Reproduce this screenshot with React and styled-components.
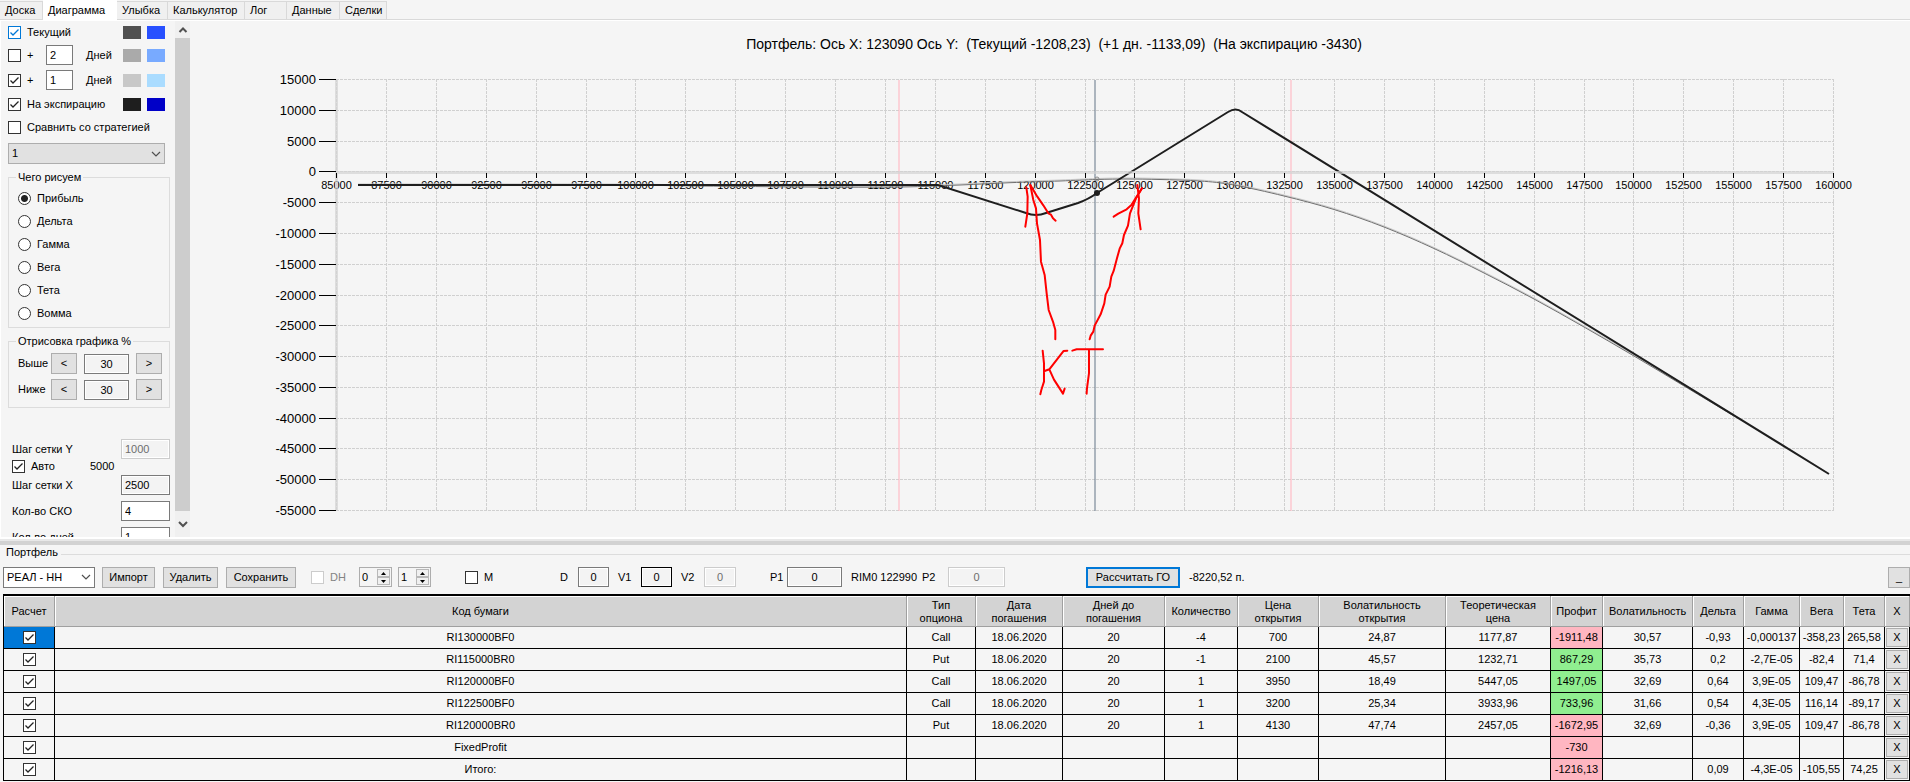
import { useState } from "react";
import styled, { createGlobalStyle } from "styled-components";

const GlobalStyle = createGlobalStyle`
  * { box-sizing: border-box; }
  body {
    margin: 0;
    background: #f5f5f5;
    color: #000;
    font: 11px/13px "Liberation Sans", Arial, sans-serif;
  }
  button, input, select { font: inherit; color: inherit; margin: 0; border-radius: 0; }
`;

const tick = (color) =>
  `url("data:image/svg+xml,%3Csvg xmlns='http://www.w3.org/2000/svg' viewBox='0 0 11 11'%3E%3Cpath d='M1.5 5.5 4 8 9.5 2.5' fill='none' stroke='%23${color}' stroke-width='1.3'/%3E%3C/svg%3E")`;

const Page = styled.div`
  height: 100vh;
  display: flex;
  flex-direction: column;
  overflow: hidden;
`;

const Tabs = styled.nav`
  display: flex;
  align-items: flex-end;
  height: 20px;
  border-bottom: 1px solid #d9d9d9;
`;

const Tab = styled.button`
  width: ${(p) => p.$w}px;
  height: ${(p) => (p.$active ? 20 : 18)}px;
  margin-bottom: ${(p) => (p.$active ? -1 : 0)}px;
  padding: 0 0 0 5px;
  border: 1px solid #d9d9d9;
  border-width: ${(p) => (p.$active ? "0" : "1px 1px 0 0")};
  background: ${(p) => (p.$active ? "#fff" : "#f0f0f0")};
  text-align: left;
`;

const Workspace = styled.main`
  flex: 1;
  min-height: 0;
  display: flex;
  border-top: 1px solid #fff;
  border-left: 1px solid #fff;
`;

const Sidebar = styled.aside`
  width: 174px;
  flex: none;
  padding: 0 5px 0 7px;
  overflow: hidden;
`;

const Scrollbar = styled.div`
  width: 15px;
  flex: none;
  display: flex;
  flex-direction: column;
  background: #f0f0f0;
`;

const ScrollButton = styled.button`
  height: ${(p) => p.$h}px;
  padding: 0;
  border: 0;
  background: none;
  display: flex;
  align-items: center;
  justify-content: center;
`;

const Thumb = styled.div`
  flex: 1;
  background: #cdcdcd;
`;

const LineRow = styled.div`
  display: grid;
  grid-template-columns: 19px 19px 40px 37px 24px 18px;
  align-items: center;
  height: ${(p) => p.$h}px;
`;

const WideLabel = styled.label`
  grid-column: span ${(p) => p.$span};
  white-space: nowrap;
`;

const Swatch = styled.span`
  width: 18px;
  height: 13px;
  background: ${(p) => p.$color};
`;

const Check = styled.input.attrs({ type: "checkbox" })`
  appearance: none;
  flex: none;
  width: 13px;
  height: 13px;
  border: 1px solid ${(p) => (p.$blue ? "#0078d7" : "#333")};
  background: #fff;
  &:checked { background: #fff ${(p) => tick(p.$blue ? "0078d7" : "222222")}; }
  &:disabled { border-color: #ccc; }
`;

const Radio = styled.input.attrs({ type: "radio" })`
  appearance: none;
  width: 13px;
  height: 13px;
  border: 1px solid #333;
  border-radius: 50%;
  background: #fff;
  &:checked { background: radial-gradient(circle, #222 3px, #fff 4px); }
`;

const Input = styled.input`
  width: ${(p) => p.$w}px;
  height: 20px;
  padding: 0 3px;
  border: 1px solid ${(p) => p.$border || "#7a7a7a"};
  background: ${(p) => (p.$flat ? "#f3f3f3" : "#fff")};
  box-shadow: inset 0 0 0 1px #fff;
  text-align: ${(p) => (p.$center ? "center" : "left")};
  &:disabled { border-color: #ccc; color: #6d6d6d; }
`;

const SelectBox = styled.div`
  display: grid;
  align-items: center;
  width: ${(p) => p.$w};
  margin-top: ${(p) => p.$top || 0}px;
  select, svg { grid-area: 1 / 1; }
  svg { justify-self: end; margin-right: 4px; pointer-events: none; }
`;

const Select = styled.select`
  appearance: none;
  width: 100%;
  height: 21px;
  padding: 0 3px;
  border: 1px solid ${(p) => (p.$gray ? "#adadad" : "#7a7a7a")};
  background: ${(p) => (p.$gray ? "#e1e1e1" : "#fff")};
`;

const Group = styled.fieldset`
  margin: ${(p) => p.$top}px 0 0;
  padding: ${(p) => p.$pad} 0 ${(p) => p.$bottom}px 9px;
  border: 1px solid #dcdcdc;
  legend { margin-left: -2px; padding: 0 2px; }
`;

const RadioRow = styled.label`
  display: flex;
  align-items: center;
  gap: 6px;
  height: 23px;
`;

const PercentRow = styled.div`
  display: grid;
  grid-template-columns: 33px 33px 52px 26px;
  align-items: center;
  & + & { margin-top: 5px; }
`;

const Button = styled.button`
  width: ${(p) => p.$w}px;
  height: 21px;
  margin-left: ${(p) => p.$left || 0}px;
  padding: 0;
  border: ${(p) => (p.$focus ? "2px solid #0078d7" : "1px solid #adadad")};
  background: #e1e1e1;
`;

const CollapseButton = styled(Button)`
  margin-left: auto;
`;

const StepRow = styled.div`
  display: flex;
  align-items: center;
  justify-content: space-between;
  margin-top: ${(p) => p.$top}px;
  padding-left: 4px;
`;

const AutoRow = styled.div`
  display: grid;
  grid-template-columns: 19px 59px auto;
  align-items: center;
  height: 14px;
  padding-left: 4px;
`;

const ChartSvg = styled.svg`
  flex: 1;
  min-width: 0;
  height: 100%;
  font-size: 11px;
`;

const ChartTitle = styled.text`
  font-size: 14px;
  text-anchor: middle;
  white-space: pre;
`;

const Splitter = styled.div`
  height: 8px;
  flex: none;
  border-top: 2px solid #fff;
  border-bottom: 4px solid #d2d2d2;
  background: #e8e8e8;
`;

const Portfolio = styled.section`
  flex: none;
  padding: 0 0 1px 3px;
`;

const Caption = styled.h2`
  display: flex;
  align-items: center;
  gap: 3px;
  height: 15px;
  margin: 0 0 0 3px;
  font-size: 11px;
  font-weight: 400;
  &::after { content: ""; flex: 1; margin-top: 3px; border-top: 1px solid #dcdcdc; }
`;

const Toolbar = styled.div`
  display: flex;
  align-items: center;
  height: 34px;
  white-space: nowrap;
`;

const Field = styled.label`
  display: flex;
  align-items: center;
  margin-left: ${(p) => p.$left || 0}px;
  color: ${(p) => (p.$dim ? "#838383" : "inherit")};
`;

const FieldName = styled.span`
  width: ${(p) => p.$w}px;
`;

const CheckField = styled(Field)`
  width: ${(p) => p.$w}px;
  gap: 6px;
`;

const Spin = styled.div`
  display: flex;
  width: 33px;
  height: 20px;
  margin-left: ${(p) => p.$left || 0}px;
  padding: 1px;
  border: 1px solid #adadad;
  input {
    width: 15px;
    flex: 1;
    padding: 0 1px;
    border: 0;
    background: none;
  }
`;

const SpinButtons = styled.div`
  display: grid;
  grid-template-rows: 1fr 1fr;
  width: 13px;
  button {
    display: flex;
    align-items: center;
    justify-content: center;
    padding: 0;
    border: 1px solid #b8b8b8;
    background: #f0f0f0;
  }
`;

const Status = styled.span`
  margin-left: 9px;
`;

const Grid = styled.table`
  width: 100%;
  table-layout: fixed;
  border-collapse: separate;
  border-spacing: 0;
  border-top: 2px solid #000;
  border-left: 1px solid #000;
`;

const Head = styled.th`
  height: 31px;
  padding: 1px ${(p) => p.$pad}px 0;
  border-right: 1px solid #a0a0a0;
  border-bottom: 1px solid #a0a0a0;
  background: #d3d3d3;
  box-shadow: inset 1px 1px #fff;
  font-weight: 400;
`;

const tones = { bad: "#ffb6c1", good: "#90ee90", picked: "#0078d7" };

const Cell = styled.td`
  height: 22px;
  padding: 0;
  border-right: 1px solid #000;
  border-bottom: 1px solid #000;
  background: ${(p) => tones[p.$tone] || "#f5f5f5"};
  text-align: center;
  white-space: nowrap;
  input, button { display: block; margin: 0 auto; }
`;

const CloseButton = styled.button`
  width: 22px;
  height: 19px;
  padding: 0;
  border: 1px solid #adadad;
  background: #e1e1e1;
`;

const tabs = [
  ["Доска", 43], ["Диаграмма", 74], ["Улыбка", 51], ["Калькулятор", 77],
  ["Лог", 42], ["Данные", 53], ["Сделки", 47],
];

const greeks = ["Прибыль", "Дельта", "Гамма", "Вега", "Тета", "Вомма"];

const columns = [
  ["Расчет", 51], ["Код бумаги"], ["Тип опциона", 69], ["Дата погашения", 87],
  ["Дней до погашения", 102], ["Количество", 73], ["Цена открытия", 81],
  ["Волатильность открытия", 127], ["Теоретическая цена", 105], ["Профит", 52],
  ["Волатильность", 90], ["Дельта", 51], ["Гамма", 56], ["Вега", 44],
  ["Тета", 41], ["X", 25],
];

const rows = [
  ["RI130000BF0", "Call", "18.06.2020", "20", "-4", "700", "24,87", "1177,87", "-1911,48", "30,57", "-0,93", "-0,000137", "-358,23", "265,58"],
  ["RI115000BR0", "Put", "18.06.2020", "20", "-1", "2100", "45,57", "1232,71", "867,29", "35,73", "0,2", "-2,7E-05", "-82,4", "71,4"],
  ["RI120000BF0", "Call", "18.06.2020", "20", "1", "3950", "18,49", "5447,05", "1497,05", "32,69", "0,64", "3,9E-05", "109,47", "-86,78"],
  ["RI122500BF0", "Call", "18.06.2020", "20", "1", "3200", "25,34", "3933,96", "733,96", "31,66", "0,54", "4,3E-05", "116,14", "-89,17"],
  ["RI120000BR0", "Put", "18.06.2020", "20", "1", "4130", "47,74", "2457,05", "-1672,95", "32,69", "-0,36", "3,9E-05", "109,47", "-86,78"],
  ["FixedProfit", "", "", "", "", "", "", "", "-730", "", "", "", "", ""],
  ["Итого:", "", "", "", "", "", "", "", "-1216,13", "", "0,09", "-4,3E-05", "-105,55", "74,25"],
];

const PROFIT = 8;

const Chevron = ({ up, bold }) => (
  <svg width="10" height="8" viewBox="0 0 10 8" aria-hidden="true">
    <path d={up ? "M1.5 6 5 2.5 8.5 6" : "M1 2 5 6 9 2"} fill="none" stroke="#505050" strokeWidth={bold ? 2 : 1.2} />
  </svg>
);

const Arrow = ({ up }) => (
  <svg width="5" height="3" viewBox="0 0 5 3" aria-hidden="true">
    <path d={up ? "M0 3 2.5 0 5 3z" : "M0 0 2.5 3 5 0z"} />
  </svg>
);

// chart scales
const px = (price) => Math.round(336 + ((price - 85000) / 75000) * 1497) + 0.5;
const py = (value) => Math.round(79 + ((15000 - value) / 70000) * 431) + 0.5;
const prices = Array.from({ length: 31 }, (_, i) => 85000 + i * 2500);
const values = Array.from({ length: 15 }, (_, i) => 15000 - i * 5000);

const current = [
  [358, 185], [600, 185], [700, 186], [810, 187], [900, 187], [960, 185], [1010, 182.7],
  [1060, 181], [1097, 179.5], [1127, 179], [1160, 179.5], [1200, 181], [1234, 185],
  [1284, 196], [1334, 209.5], [1384, 227], [1434, 248.5], [1484, 273], [1534, 299],
  [1584, 327], [1634, 356], [1684, 386], [1734, 416],
];

// smooth line through the points
const smooth = (pts, dy = 0) => {
  let d = `M${pts[0][0]} ${pts[0][1] + dy}`;
  for (let i = 0; i < pts.length - 1; i++) {
    const a = pts[i - 1] || pts[i];
    const b = pts[i];
    const c = pts[i + 1];
    const e = pts[i + 2] || c;
    d += `C${b[0] + (c[0] - a[0]) / 6} ${b[1] + dy + (c[1] - a[1]) / 6} ${c[0] - (e[0] - b[0]) / 6} ${c[1] + dy - (e[1] - b[1]) / 6} ${c[0]} ${c[1] + dy}`;
  }
  return d;
};

function Chart() {
  return (
    <ChartSvg viewBox="190 21 1720 512" preserveAspectRatio="xMinYMin meet" role="img" aria-label="Диаграмма портфеля">
      <ChartTitle x="1054" y="49">
        {"Портфель: Ось X: 123090 Ось Y:  (Текущий -1208,23)  (+1 дн. -1133,09)  (На экспирацию -3430)"}
      </ChartTitle>
      <g stroke="#d0d0d0" strokeDasharray="3 1">
        {prices.map((p) => <line key={p} x1={px(p)} x2={px(p)} y1="79" y2="511" />)}
        {values.map((v) => <line key={v} x1="336" x2="1834" y1={py(v)} y2={py(v)} />)}
      </g>
      <path d="M899 80V511M1291 80V511" stroke="#ffb6c1" strokeOpacity="0.55" strokeWidth="2" />
      <path d="M1095 80V511" stroke="#708090" strokeOpacity="0.55" strokeWidth="2" />
      <g fontSize="13" textAnchor="end">
        {values.map((v) => <text key={v} x="316" y={py(v) + 4}>{v}</text>)}
      </g>
      <g textAnchor="middle">
        {prices.map((p) => <text key={p} x={px(p)} y="189">{p}</text>)}
      </g>
      <g fill="none">
        <path d={smooth(current, -1)} stroke="#c8c8c8" />
        <path d={smooth(current)} stroke="#707070" />
        <path
          d="M358 185H938L1026 213Q1036 217 1046 213L1078 203Q1089 199 1097 193L1228 112Q1236 107 1242 112L1829 474"
          stroke="#1e1e1e"
          strokeWidth="2"
        />
      </g>
      <circle cx="1097" cy="193" r="3" fill="#1e1e1e" />
      <circle cx="1097" cy="179" r="2" fill="none" stroke="#888" />
      <path d="M336.5 79V511M336 172.5H1834" stroke="#d3d3d3" strokeWidth="3" strokeOpacity="0.7" />
      <g stroke="#000">
        {values.map((v) => <line key={v} x1="319" x2="336" y1={py(v)} y2={py(v)} />)}
        {prices.map((p) => <line key={p} x1={px(p)} x2={px(p)} y1="173" y2="178" />)}
      </g>
      {/* hand-drawn pen marks */}
      <g transform="translate(900 80) scale(.3333)" fill="none" stroke="#f00" strokeWidth="6" strokeLinejoin="round" strokeLinecap="round">
        <path d="M379 322 383 350 382 400 376 440M391 315 400 360 408 385 411 430 420 480 423 545 434 585 440 640 446 690 460 728 466 750V778" />
        <path d="M391 315 412 350 430 376 445 400 453 404 459 415 467 422" />
        <path d="M712 315 717 355 715 400 722 448M726 325 708 355 690 400 684 437 672 465 667 490 659 506 651 535 641 573 634 590 629 620 617 644 613 670 602 703 584 737 580 755 572 767 569 778" />
        <path d="M726 325 695 374 680 388 655 401 641 410" />
        <path d="M428 812 432 850V905L424 930 421 943M432 874 448 868 491 813 502 812M448 868 462 899 489 941 494 926M517 812 530 808H609M567 812V880L561 925 560 941" />
      </g>
    </ChartSvg>
  );
}

const DayRow = ({ h, days, checked, colors }) => (
  <LineRow $h={h}>
    <Check id={`plus${days}`} defaultChecked={checked} />
    <label htmlFor={`plus${days}`}>+</label>
    <Input $w={27} defaultValue={days} aria-label="Дней" />
    <span>Дней</span>
    {colors.map((c) => <Swatch key={c} $color={c} />)}
  </LineRow>
);

const PercentControl = ({ label }) => {
  const [percent, setPercent] = useState(30);
  return (
    <PercentRow>
      <label htmlFor={label}>{label}</label>
      <Button $w={26} onClick={() => setPercent(percent - 1)}>&lt;</Button>
      <Input id={label} $w={45} $center $flat readOnly value={percent} />
      <Button $w={26} onClick={() => setPercent(percent + 1)}>&gt;</Button>
    </PercentRow>
  );
};

const SpinBox = ({ initial, label, left }) => {
  const [value, setValue] = useState(initial);
  return (
    <Spin $left={left}>
      <input value={value} aria-label={label} onChange={(e) => setValue(Number(e.target.value) || 0)} />
      <SpinButtons>
        <button aria-label="Больше" onClick={() => setValue(value + 1)}><Arrow up /></button>
        <button aria-label="Меньше" onClick={() => setValue(value - 1)}><Arrow /></button>
      </SpinButtons>
    </Spin>
  );
};

const toneOf = (i, value) => {
  if (i !== PROFIT) return undefined;
  return value.startsWith("-") ? "bad" : "good";
};

const App = () => {
  const [greek, setGreek] = useState("Прибыль");

  return (
    <Page>
      <GlobalStyle />
      <Tabs>
        {tabs.map(([name, w]) => <Tab key={name} $w={w} $active={name === "Диаграмма"}>{name}</Tab>)}
      </Tabs>
      <Workspace>
        <Sidebar>
          <LineRow $h={22}>
            <Check id="current" $blue defaultChecked />
            <WideLabel $span={3} htmlFor="current">Текущий</WideLabel>
            <Swatch $color="#505050" />
            <Swatch $color="#2850ff" />
          </LineRow>
          <DayRow h={24} days="2" colors={["#aaaaaa", "#78aaff"]} />
          <DayRow h={26} days="1" checked colors={["#c8c8c8", "#aadcff"]} />
          <LineRow $h={22}>
            <Check id="expiry" defaultChecked />
            <WideLabel $span={3} htmlFor="expiry">На экспирацию</WideLabel>
            <Swatch $color="#1e1e1e" />
            <Swatch $color="#0000c8" />
          </LineRow>
          <LineRow $h={24}>
            <Check id="compare" />
            <WideLabel $span={5} htmlFor="compare">Сравнить со стратегией</WideLabel>
          </LineRow>
          <SelectBox $w="157px" $top={4}>
            <Select $gray aria-label="Стратегия"><option>1</option></Select>
            <Chevron />
          </SelectBox>
          <Group $top={7} $pad="3px" $bottom={2}>
            <legend>Чего рисуем</legend>
            {greeks.map((g) => (
              <RadioRow key={g}>
                <Radio name="greek" checked={greek === g} onChange={() => setGreek(g)} />
                {g}
              </RadioRow>
            ))}
          </Group>
          <Group $top={7} $pad="5px" $bottom={7}>
            <legend>Отрисовка графика %</legend>
            <PercentControl label="Выше" />
            <PercentControl label="Ниже" />
          </Group>
          <StepRow $top={31}>
            <label htmlFor="stepY">Шаг сетки Y</label>
            <Input id="stepY" $w={49} $flat disabled defaultValue="1000" />
          </StepRow>
          <AutoRow>
            <Check id="auto" defaultChecked />
            <label htmlFor="auto">Авто</label>
            <span>5000</span>
          </AutoRow>
          <StepRow $top={2}>
            <label htmlFor="stepX">Шаг сетки X</label>
            <Input id="stepX" $w={49} $flat readOnly value="2500" />
          </StepRow>
          <StepRow $top={6}>
            <label htmlFor="sko">Кол-во СКО</label>
            <Input id="sko" $w={49} defaultValue="4" />
          </StepRow>
          <StepRow $top={6}>
            <label htmlFor="days">Кол-во дней</label>
            <Input id="days" $w={49} defaultValue="1" />
          </StepRow>
        </Sidebar>
        <Scrollbar>
          <ScrollButton $h={17} aria-label="Вверх"><Chevron up bold /></ScrollButton>
          <Thumb />
          <ScrollButton $h={26} aria-label="Вниз"><Chevron bold /></ScrollButton>
        </Scrollbar>
        <Chart />
      </Workspace>
      <Splitter />
      <Portfolio>
        <Caption>Портфель</Caption>
        <Toolbar>
          <SelectBox $w="92px">
            <Select aria-label="Портфель"><option>РЕАЛ - НН</option></Select>
            <Chevron />
          </SelectBox>
          <Button $w={53} $left={7}>Импорт</Button>
          <Button $w={55} $left={8}>Удалить</Button>
          <Button $w={70} $left={8}>Сохранить</Button>
          <CheckField $w={48} $left={15} $dim><Check disabled />DH</CheckField>
          <SpinBox initial={0} label="DH от" />
          <SpinBox initial={1} label="DH до" left={6} />
          <CheckField $w={95} $left={34}><Check />M</CheckField>
          <Field><FieldName $w={18}>D</FieldName><Input $w={31} $center $flat defaultValue="0" /></Field>
          <Field $left={9}><FieldName $w={23}>V1</FieldName><Input $w={31} $center $flat $border="#000" defaultValue="0" /></Field>
          <Field $left={9}><FieldName $w={23}>V2</FieldName><Input $w={32} $center $flat disabled defaultValue="0" /></Field>
          <Field $left={34}><FieldName $w={17}>P1</FieldName><Input $w={55} $center $flat defaultValue="0" /></Field>
          <Field $left={9}>
            <FieldName $w={71}>RIM0 122990</FieldName>
            <FieldName $w={26}>P2</FieldName>
            <Input $w={57} $center $flat disabled defaultValue="0" />
          </Field>
          <Button $w={94} $left={81} $focus>Рассчитать ГО</Button>
          <Status>-8220,52 п.</Status>
          <CollapseButton $w={22}>_</CollapseButton>
        </Toolbar>
        <Grid>
          <colgroup>
            {columns.map(([name, w], i) => <col key={name + i} width={w} />)}
          </colgroup>
          <thead>
            <tr>{columns.map(([name, w], i) => <Head key={name + i} $pad={w > 60 ? 6 : 0}>{name}</Head>)}</tr>
          </thead>
          <tbody>
            {rows.map((row, r) => (
              <tr key={row[0]}>
                <Cell $tone={r === 0 ? "picked" : undefined}>
                  <Check defaultChecked aria-label={row[0]} />
                </Cell>
                {row.map((value, i) => <Cell key={i} $tone={toneOf(i, value)}>{value}</Cell>)}
                <Cell><CloseButton>X</CloseButton></Cell>
              </tr>
            ))}
          </tbody>
        </Grid>
      </Portfolio>
    </Page>
  );
};

export default App;
